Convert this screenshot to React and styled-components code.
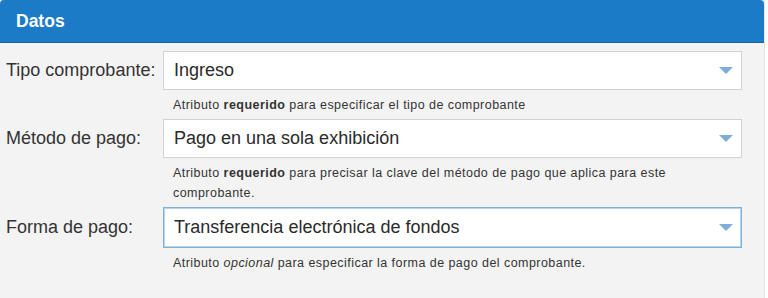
import React from "react";
import styled, { createGlobalStyle } from "styled-components";

const Global = createGlobalStyle`
  html, body { margin: 0; padding: 0; background: #ffffff; }
  body { font-family: "Liberation Sans", Arial, sans-serif; }
`;

const Panel = styled.section`
  width: 765px;
  height: 298px;
  background: #f3f3f3;
  border-right: 1px solid #e4e4e4;
  box-sizing: border-box;
  overflow: hidden;
`;

const Header = styled.div`
  height: 43px;
  background: #1b7bc6;
  border-bottom: 1px solid #16649f;
  border-radius: 4px 4px 0 0;
  display: flex;
  align-items: center;
  padding-left: 16px;
  box-sizing: border-box;
  color: #ffffff;
  font-weight: bold;
  font-size: 17.5px;
`;

const Body = styled.div`
  padding: 8px 0 0 6px;
  display: flex;
  flex-direction: column;
`;

const Row = styled.div`
  display: grid;
  grid-template-columns: 157px 579px;
  align-items: start;
`;

const Label = styled.label`
  grid-column: 1;
  height: ${(p) => (p.$focus ? 41 : 39)}px;
  display: flex;
  align-items: center;
  font-size: 18px;
  color: #333333;
`;

const Field = styled.div`
  grid-column: 2;
  display: flex;
  flex-direction: column;
`;

const Select = styled.div`
  height: ${(p) => (p.$focus ? 41 : 39)}px;
  box-sizing: border-box;
  background: #ffffff;
  border: 1px solid ${(p) => (p.$focus ? "#7fb0d6" : "#d2d2d2")};
  box-shadow: ${(p) => (p.$focus ? "inset 0 0 0 1px #b9d5ea" : "none")};
  display: flex;
  align-items: center;
  justify-content: space-between;
  padding: 0 8px 0 10px;
  font-size: 18px;
  color: #2a2a2a;
`;

const Help = styled.div`
  padding: 5px 50px 0 10px;
  margin-bottom: 4px;
  font-size: 12.5px;
  letter-spacing: 0.45px;
  line-height: 20px;
  color: #333333;
  b { font-weight: bold; }
  i { font-style: italic; }
`;

const Arrow = () => (
  <svg width="14" height="7" viewBox="0 0 14 7" aria-hidden="true">
    <path d="M0 0 L14 0 L7 7 Z" fill="#7eaed8" />
  </svg>
);

const rows = [
  {
    label: "Tipo comprobante:",
    value: "Ingreso",
    help: (
      <>
        Atributo <b>requerido</b> para especificar el tipo de comprobante
      </>
    ),
  },
  {
    label: "Método de pago:",
    value: "Pago en una sola exhibición",
    help: (
      <>
        Atributo <b>requerido</b> para precisar la clave del método de pago que
        aplica para este comprobante.
      </>
    ),
  },
  {
    label: "Forma de pago:",
    value: "Transferencia electrónica de fondos",
    focus: true,
    help: (
      <>
        Atributo <i>opcional</i> para especificar la forma de pago del
        comprobante.
      </>
    ),
  },
];

export default function App() {
  return (
    <>
      <Global />
      <Panel>
        <Header>Datos</Header>
        <Body>
          {rows.map((r) => (
            <Row key={r.label}>
              <Label $focus={r.focus}>{r.label}</Label>
              <Field>
                <Select $focus={r.focus}>
                  <span>{r.value}</span>
                  <Arrow />
                </Select>
                <Help>{r.help}</Help>
              </Field>
            </Row>
          ))}
        </Body>
      </Panel>
    </>
  );
}
